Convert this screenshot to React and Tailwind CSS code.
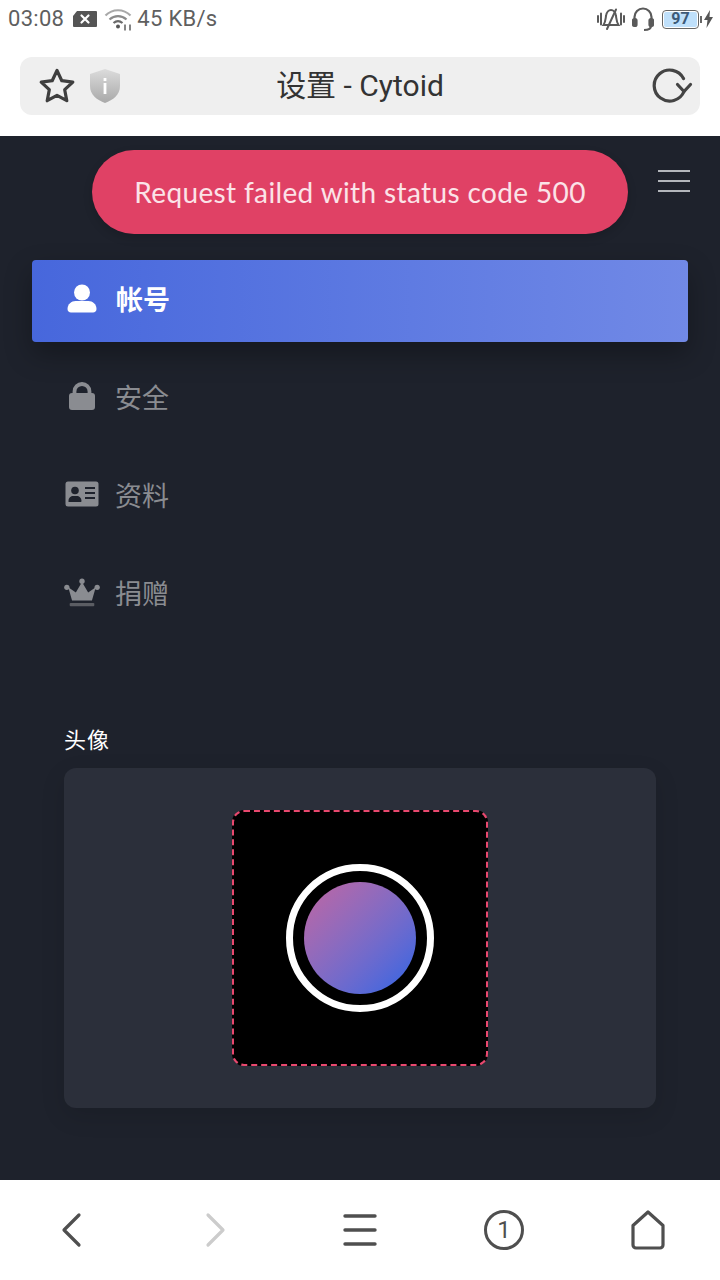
function Star() {
  return (
    <svg width="38" height="38" viewBox="0 0 38 38" fill="none" stroke="#3f3f3f" strokeWidth="3.2" strokeLinejoin="round">
      <path d="M19 3.5l4.8 10.2 11 1.4-8.1 7.6 2.1 11L19 28.3 9.2 33.7l2.1-11-8.1-7.6 11-1.4z" />
    </svg>
  );
}
function Shield() {
  return (
    <svg width="32" height="36" viewBox="0 0 32 36">
      <defs>
        <linearGradient id="sg" x1="0" y1="0" x2="0" y2="1">
          <stop offset="0" stopColor="#dcdcdc" />
          <stop offset="1" stopColor="#a9a9a9" />
        </linearGradient>
      </defs>
      <path d="M16 1l15 5v12c0 9-7 14-15 17C8 32 1 27 1 18V6z" fill="url(#sg)" />
      <rect x="14.6" y="10" width="2.8" height="3" fill="#fff" />
      <rect x="14.6" y="15" width="2.8" height="11" fill="#fff" />
    </svg>
  );
}
function Reload() {
  return (
    <svg width="42" height="36" viewBox="0 0 42 36" fill="none" stroke="#444" strokeWidth="3.2" strokeLinecap="round" strokeLinejoin="round">
      <path d="M33 23.500A15.500 15.500 0 1 1 32.500 10.500" />
      <path d="M26.500 16.500l6.500 7 6.500-7" />
    </svg>
  );
}
function StatusLeft() {
  return (
    <div className="flex items-center text-[#5f5f5f]">
      <span className="text-[22px] leading-none font-['Roboto',sans-serif] tracking-[0.3px]">03:08</span>
      <svg className="ml-[8px]" width="26" height="18" viewBox="0 0 26 18">
        <path d="M5 1h19a1 1 0 0 1 1 1v14a1 1 0 0 1-1 1H2a1 1 0 0 1-1-1V6z" fill="#555" />
        <path d="M9.500 5.500l7 7m0-7l-7 7" stroke="#fff" strokeWidth="2.200" strokeLinecap="round" />
      </svg>
      <svg className="ml-[6px]" width="30" height="24" viewBox="0 0 30 24" fill="none" stroke="#a8a8a8" strokeWidth="2.200">
        <path d="M1.500 8.500C8.500 1.500 19.500 1.500 26.500 8.500" />
        <path d="M5.500 12.500C10.500 8 17.500 8 22.500 12.500" stroke="#8a8a8a" />
        <path d="M9.500 16C12.500 13.500 15.500 13.500 18.500 16" stroke="#6a6a6a" />
        <circle cx="14" cy="19.500" r="2" fill="#555" stroke="none" />
        <path d="M21 17.500v6M26 17.500v6" stroke="#666" strokeWidth="1.600" />
      </svg>
      <span className="ml-[3px] text-[22px] leading-none font-['Roboto',sans-serif] tracking-[0.3px]">45 KB/s</span>
    </div>
  );
}
function StatusRight() {
  return (
    <div className="flex items-center">
      <svg width="28" height="24" viewBox="0 0 28 24" fill="none" stroke="#5a5a5a" strokeWidth="2">
        <path d="M6.500 18c2-3 2-6 2.500-9C9.500 5 12 3 14 3s4.500 2 5 6c.5 3 .5 6 2.500 9z" />
        <path d="M19 2.500L10 22M1 9v6M4 6.500v11M24 6.500v11M27 9v6" strokeLinecap="round" />
      </svg>
      <svg className="ml-[7px]" width="22" height="25" viewBox="0 0 22 25" fill="none" stroke="#5a5a5a" strokeWidth="2.200">
        <path d="M2.500 14V10a8.500 8.500 0 0 1 17 0v4" />
        <rect x="1" y="12" width="3.500" height="7" rx="1.500" fill="#5a5a5a" />
        <rect x="17.500" y="12" width="3.500" height="7" rx="1.500" fill="#5a5a5a" />
        <path d="M19 19c0 3-3 4-7 4" />
      </svg>
      <div className="ml-[8px] w-[37px] h-[19px] rounded-[4px] border-[1.5px] border-[#666] p-[1px] flex">
        <div className="flex-1 bg-[#bfe0fb] rounded-[2px] flex items-center justify-center text-[16px] leading-none font-bold text-[#3d5a78] font-['Roboto',sans-serif]">97</div>
      </div>
      <div className="w-[2px] h-[7px] bg-[#666] ml-[1px]" />
      <svg className="ml-[2px]" width="9" height="18" viewBox="0 0 9 18">
        <path d="M6 0L0 10h3.500L2.500 18 9 7H5.500z" fill="#555" />
      </svg>
    </div>
  );
}
function IconUser() {
  return (
    <svg width="30" height="30" viewBox="0 0 30 30" fill="#fff">
      <circle cx="15" cy="8.500" r="8" />
      <path d="M0.500 25c0-5 4-8 8-8h13c4 0 8 3 8 8 0 2-1.500 3.500-3.500 3.500H4C2 28.500.500 27 .500 25z" />
    </svg>
  );
}
function IconLock() {
  return (
    <svg width="28" height="28" viewBox="0 0 28 28" fill="#8a8c91">
      <path d="M6.500 12V9.500a7.500 7.500 0 0 1 15 0V12" fill="none" stroke="#8a8c91" strokeWidth="3.800" />
      <rect x="1" y="11" width="26" height="17" rx="3" />
    </svg>
  );
}
function IconCard() {
  return (
    <svg width="34" height="26" viewBox="0 0 34 26">
      <rect x="0.500" y="0.500" width="33" height="25" rx="2.500" fill="#8a8c91" />
      <circle cx="10" cy="9.500" r="3.800" fill="#1e222c" />
      <path d="M3.500 20c0-3.500 2.500-5 4.500-5h4c2 0 4.500 1.500 4.500 5 0 .7-.4 1-1 1h-11.500c-.6 0-.5-.3-.5-1z" fill="#1e222c" />
      <path d="M20 7h10M20 12h10M20 17h10" stroke="#1e222c" strokeWidth="1.800" />
    </svg>
  );
}
function IconCrown() {
  return (
    <svg width="36" height="29" viewBox="0 0 38 30" fill="#8a8c91">
      <circle cx="19" cy="3" r="2.800" />
      <circle cx="3" cy="9.500" r="2.800" />
      <circle cx="35" cy="9.500" r="2.800" />
      <path d="M19 4l6.500 11 8-5.500-4 14H8.500l-4-14 8 5.500z" />
      <rect x="6" y="26" width="26" height="3.500" rx="1" fill="#5b5d63" />
    </svg>
  );
}
function NavItem({ icon, label, active }) {
  return (
    <div className={active
      ? "h-[82px] pb-[4px] rounded-[4px] flex items-center bg-gradient-to-r from-[#4767dc] to-[#7189e6] shadow-[0_12px_28px_rgba(0,0,0,0.3)]"
      : "h-[82px] pb-[4px] flex items-center"}>
      <div className={active
        ? "ml-[30px] mr-[14px] w-[40px] flex justify-center"
        : "ml-[30px] mr-[13px] w-[40px] flex justify-center pb-[2px]"}>{icon}</div>
      <span className={active
        ? "text-[27px] font-bold text-white"
        : "text-[27px] text-[#8a8c91]"}>{label}</span>
    </div>
  );
}
export default function App() {
  return (
    <div className="w-[720px] h-[1280px] flex flex-col bg-white overflow-hidden font-['Noto_Sans_CJK_SC',sans-serif]">
      <div className="h-[44px] pl-[8px] pr-[7px] pb-[6px] flex items-center justify-between shrink-0">
        <StatusLeft />
        <StatusRight />
      </div>
      <div className="h-[92px] px-[20px] pt-[13px] shrink-0">
        <div className="h-[58px] rounded-[12px] bg-[#efefef] flex items-center relative">
          <div className="flex items-center pl-[18px] gap-[13px]">
            <Star />
            <Shield />
          </div>
          <div className="absolute inset-0 pb-[2px] flex items-center justify-center text-[30px] text-[#333] font-['Roboto','Noto_Sans_CJK_SC',sans-serif]">设置 - Cytoid</div>
          <div className="ml-auto pr-[7px]"><Reload /></div>
        </div>
      </div>
      <div className="relative flex-1 bg-[#1e222c] flex flex-col min-h-0">
        <div className="absolute left-[92px] top-[14px] w-[536px] h-[84px] rounded-[42px] bg-[#e04165] shadow-[0_4px_10px_rgba(0,0,0,0.15)] flex items-center justify-center text-[#fbe3e8] text-[28px] tracking-[0.37px] font-['Lato',sans-serif]">
          Request failed with status code 500
        </div>
        <div className="flex justify-end pr-[30px] pt-[34px]">
          <div className="w-[32px] h-[22px] flex flex-col justify-between">
            <div className="h-[2px] bg-[#b3b6bb]" />
            <div className="h-[2px] bg-[#b3b6bb]" />
            <div className="h-[2px] bg-[#b3b6bb]" />
          </div>
        </div>
        <div className="mt-[68px] px-[32px] flex flex-col gap-[16px]">
          <NavItem active icon={<IconUser />} label="帐号" />
          <NavItem icon={<IconLock />} label="安全" />
          <NavItem icon={<IconCard />} label="资料" />
          <NavItem icon={<IconCrown />} label="捐赠" />
        </div>
        <div className="mt-[86px] px-[64px]">
          <div className="h-[46px] text-[22px] leading-[32px] text-white tracking-[1px]">头像</div>
          <div className="h-[340px] rounded-[12px] bg-[#2b2f3a] shadow-[0_8px_24px_rgba(0,0,0,0.12)] flex items-center justify-center">
            <div className="w-[256px] h-[256px] rounded-[12px] bg-black border-2 border-dashed border-[#e8486e] flex items-center justify-center">
              <div className="w-[148px] h-[148px] rounded-full border-[7px] border-white flex items-center justify-center">
                <div className="w-[112px] h-[112px] rounded-full bg-gradient-to-br from-[#b267aa] from-[12%] to-[#4767dc] to-[86%]" />
              </div>
            </div>
          </div>
        </div>
      </div>
      <div className="h-[100px] shrink-0 bg-white grid grid-cols-5 items-center justify-items-center">
        <svg width="24" height="36" viewBox="0 0 24 36" fill="none" stroke="#4f4f4f" strokeWidth="3.200" strokeLinecap="round" strokeLinejoin="round">
          <path d="M19 3L4 18l15 15" />
        </svg>
        <svg width="24" height="36" viewBox="0 0 24 36" fill="none" stroke="#cccccc" strokeWidth="3.200" strokeLinecap="round" strokeLinejoin="round">
          <path d="M4 3l15 15L4 33" />
        </svg>
        <svg width="34" height="32" viewBox="0 0 34 32" fill="none" stroke="#4f4f4f" strokeWidth="3.400" strokeLinecap="round">
          <path d="M2 2h30M2 16h30M2 30h30" />
        </svg>
        <div className="w-[40px] h-[40px] rounded-full border-[3.5px] border-[#4f4f4f] flex items-center justify-center text-[24px] leading-none text-[#4f4f4f] font-['Roboto',sans-serif]">1</div>
        <svg width="36" height="40" viewBox="0 0 36 40" fill="none" stroke="#4f4f4f" strokeWidth="3.200" strokeLinejoin="round">
          <path d="M18 2L33 15.500V35a3 3 0 0 1-3 3H6a3 3 0 0 1-3-3V15.500z" />
        </svg>
      </div>
    </div>
  );
}
